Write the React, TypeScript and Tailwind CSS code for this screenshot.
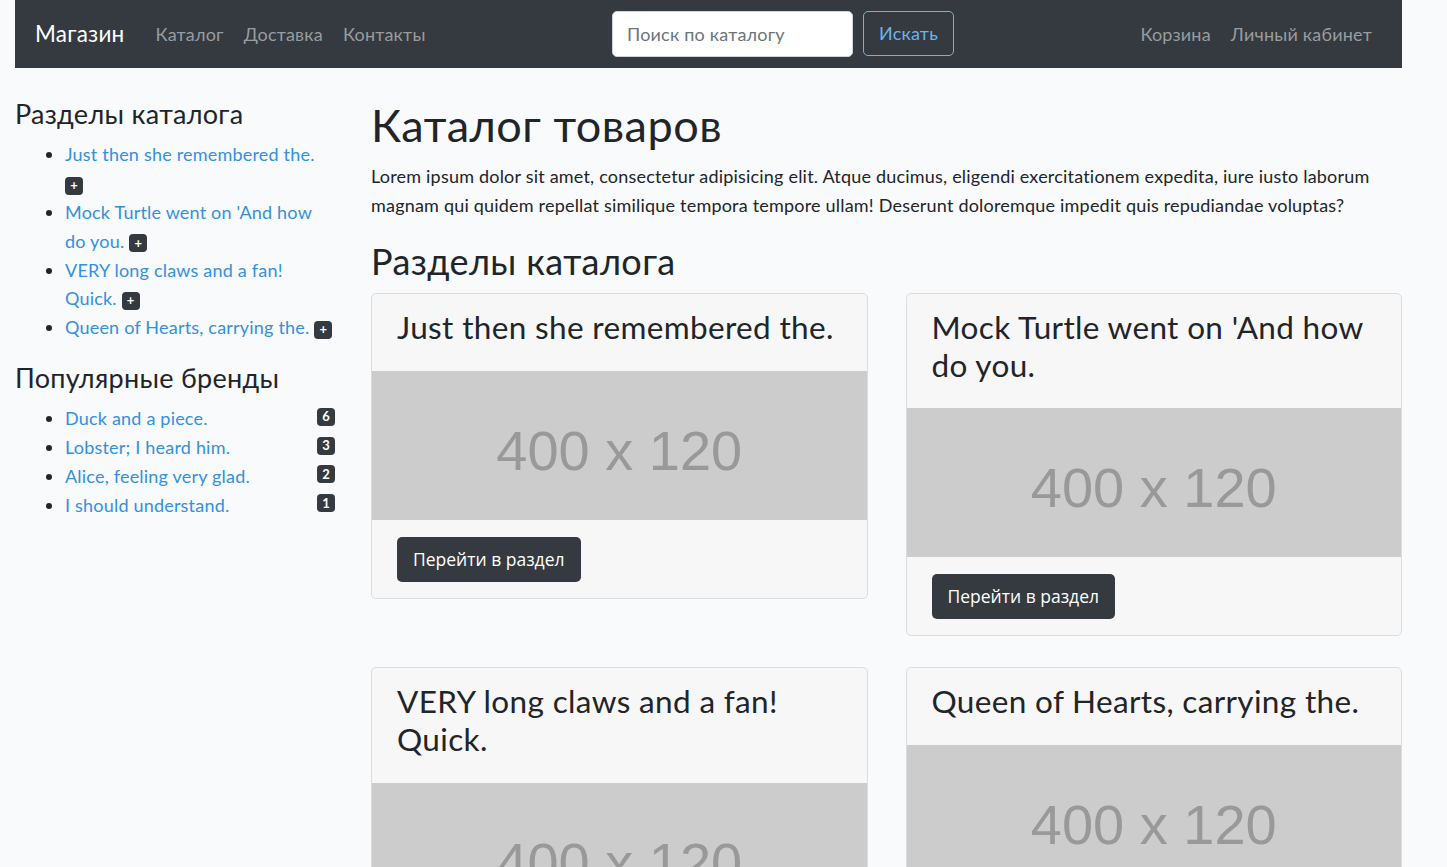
import React from 'react';

const sections = [
  "Just then she remembered the.",
  "Mock Turtle went on 'And how do you.",
  'VERY long claws and a fan! Quick.',
  'Queen of Hearts, carrying the.',
];

const brands = [
  { name: 'Duck and a piece.', count: 6 },
  { name: 'Lobster; I heard him.', count: 3 },
  { name: 'Alice, feeling very glad.', count: 2 },
  { name: 'I should understand.', count: 1 },
];

const Badge = ({ children }: { children: React.ReactNode }) => (
  <span className="inline-flex h-[18px] min-w-[18px] items-center justify-center rounded-[4px] bg-[#343a40] px-[4px] text-[13px] font-bold leading-none tracking-normal text-white">
    {children}
  </span>
);

const SectionCard = ({ title }: { title: string }) => (
  <div className="overflow-hidden rounded-[5px] border border-[#dcdddf] bg-[#f7f7f7]">
    <h3 className="px-[25px] pt-[15px] pb-[24px] text-[31.5px] leading-[37.8px] tracking-[0.011em]">{title}</h3>
    <div className="flex h-[149px] items-center justify-center bg-[#cccccc] pt-[12px] [font-family:'Liberation_Sans',Arial,sans-serif] text-[56px] tracking-normal text-[#999999]">
      400 x 120
    </div>
    <div className="px-[25px] pt-[17px] pb-[16px]">
      <button className="h-[45px] rounded-[5px] bg-[#343a40] px-[16px] [font-family:'Open_Sans',sans-serif] text-[17.5px] tracking-normal text-white">
        Перейти в раздел
      </button>
    </div>
  </div>
);

export default function App() {
  return (
    <div className="min-h-screen bg-[#f8fafc] [font-family:Lato,'Noto_Sans',sans-serif] text-[18px] leading-[28.8px] tracking-[0.2px] text-[#212529]">
      <div className="ml-[15px] w-[1387px]">
        {/* Navbar */}
        <nav className="flex h-[68px] items-center justify-between bg-[#343a40] px-[20px]">
          <div className="flex items-center">
            <a href="#" className="mr-[21px] text-[22.5px] tracking-[0.011em] text-white">Магазин</a>
            <a href="#" className="px-[10px] text-[#999c9f]">Каталог</a>
            <a href="#" className="px-[10px] text-[#999c9f]">Доставка</a>
            <a href="#" className="px-[10px] text-[#999c9f]">Контакты</a>
          </div>
          <form className="-mt-[1px] flex items-center" onSubmit={(e) => e.preventDefault()}>
            <input
              className="h-[46px] w-[241px] rounded-[5px] border border-[#ced4da] bg-white px-[14px] text-[18px] text-[#495057] placeholder:text-[#6c757d] outline-none"
              placeholder="Поиск по каталогу"
            />
            <button className="ml-[10px] h-[45px] rounded-[5px] border border-[#6cb2eb] px-[15px] text-[18px] text-[#6cb2eb]">
              Искать
            </button>
          </form>
          <div className="flex items-center">
            <a href="#" className="px-[10px] text-[#999c9f]">Корзина</a>
            <a href="#" className="px-[10px] text-[#999c9f]">Личный кабинет</a>
          </div>
        </nav>

        <div className="flex pt-[30px]">
          {/* Sidebar */}
          <aside className="w-[341px] shrink-0 pr-[21px]">
            <h4 className="mb-[10px] text-[27px] leading-[32.4px] tracking-[0.011em]">Разделы каталога</h4>
            <ul className="mb-[20px] list-disc pl-[50px]">
              {sections.map((s) => (
                <li key={s}>
                  <a href="#" className="text-[#3490dc]">{s}</a>{' '}
                  <span className="leading-none"><Badge>+</Badge></span>
                </li>
              ))}
            </ul>
            <h4 className="mb-[10px] text-[27px] leading-[32.4px] tracking-[0.011em]">Популярные бренды</h4>
            <ul className="list-disc pl-[50px]">
              {brands.map((b) => (
                <li key={b.name}>
                  <span className="float-right mt-[1px] h-[18px] leading-none"><Badge>{b.count}</Badge></span>
                  <a href="#" className="text-[#3490dc]">{b.name}</a>
                </li>
              ))}
            </ul>
          </aside>

          {/* Main */}
          <main className="flex-1 pl-[15px]">
            <h1 className="mb-[10px] text-[45px] leading-[54px] tracking-[0.011em]">Каталог товаров</h1>
            <p className="mb-[20px]">
              Lorem ipsum dolor sit amet, consectetur adipisicing elit. Atque ducimus, eligendi exercitationem expedita, iure iusto laborum magnam qui quidem repellat similique tempora tempore ullam! Deserunt doloremque impedit quis repudiandae voluptas?
            </p>
            <h2 className="mb-[10px] text-[36px] leading-[43.2px] tracking-[0.011em]">Разделы каталога</h2>
            <div className="grid grid-cols-2 items-start gap-x-[38px] gap-y-[31px]">
              {sections.map((s) => (
                <SectionCard key={s} title={s} />
              ))}
            </div>
          </main>
        </div>
      </div>
    </div>
  );
}
